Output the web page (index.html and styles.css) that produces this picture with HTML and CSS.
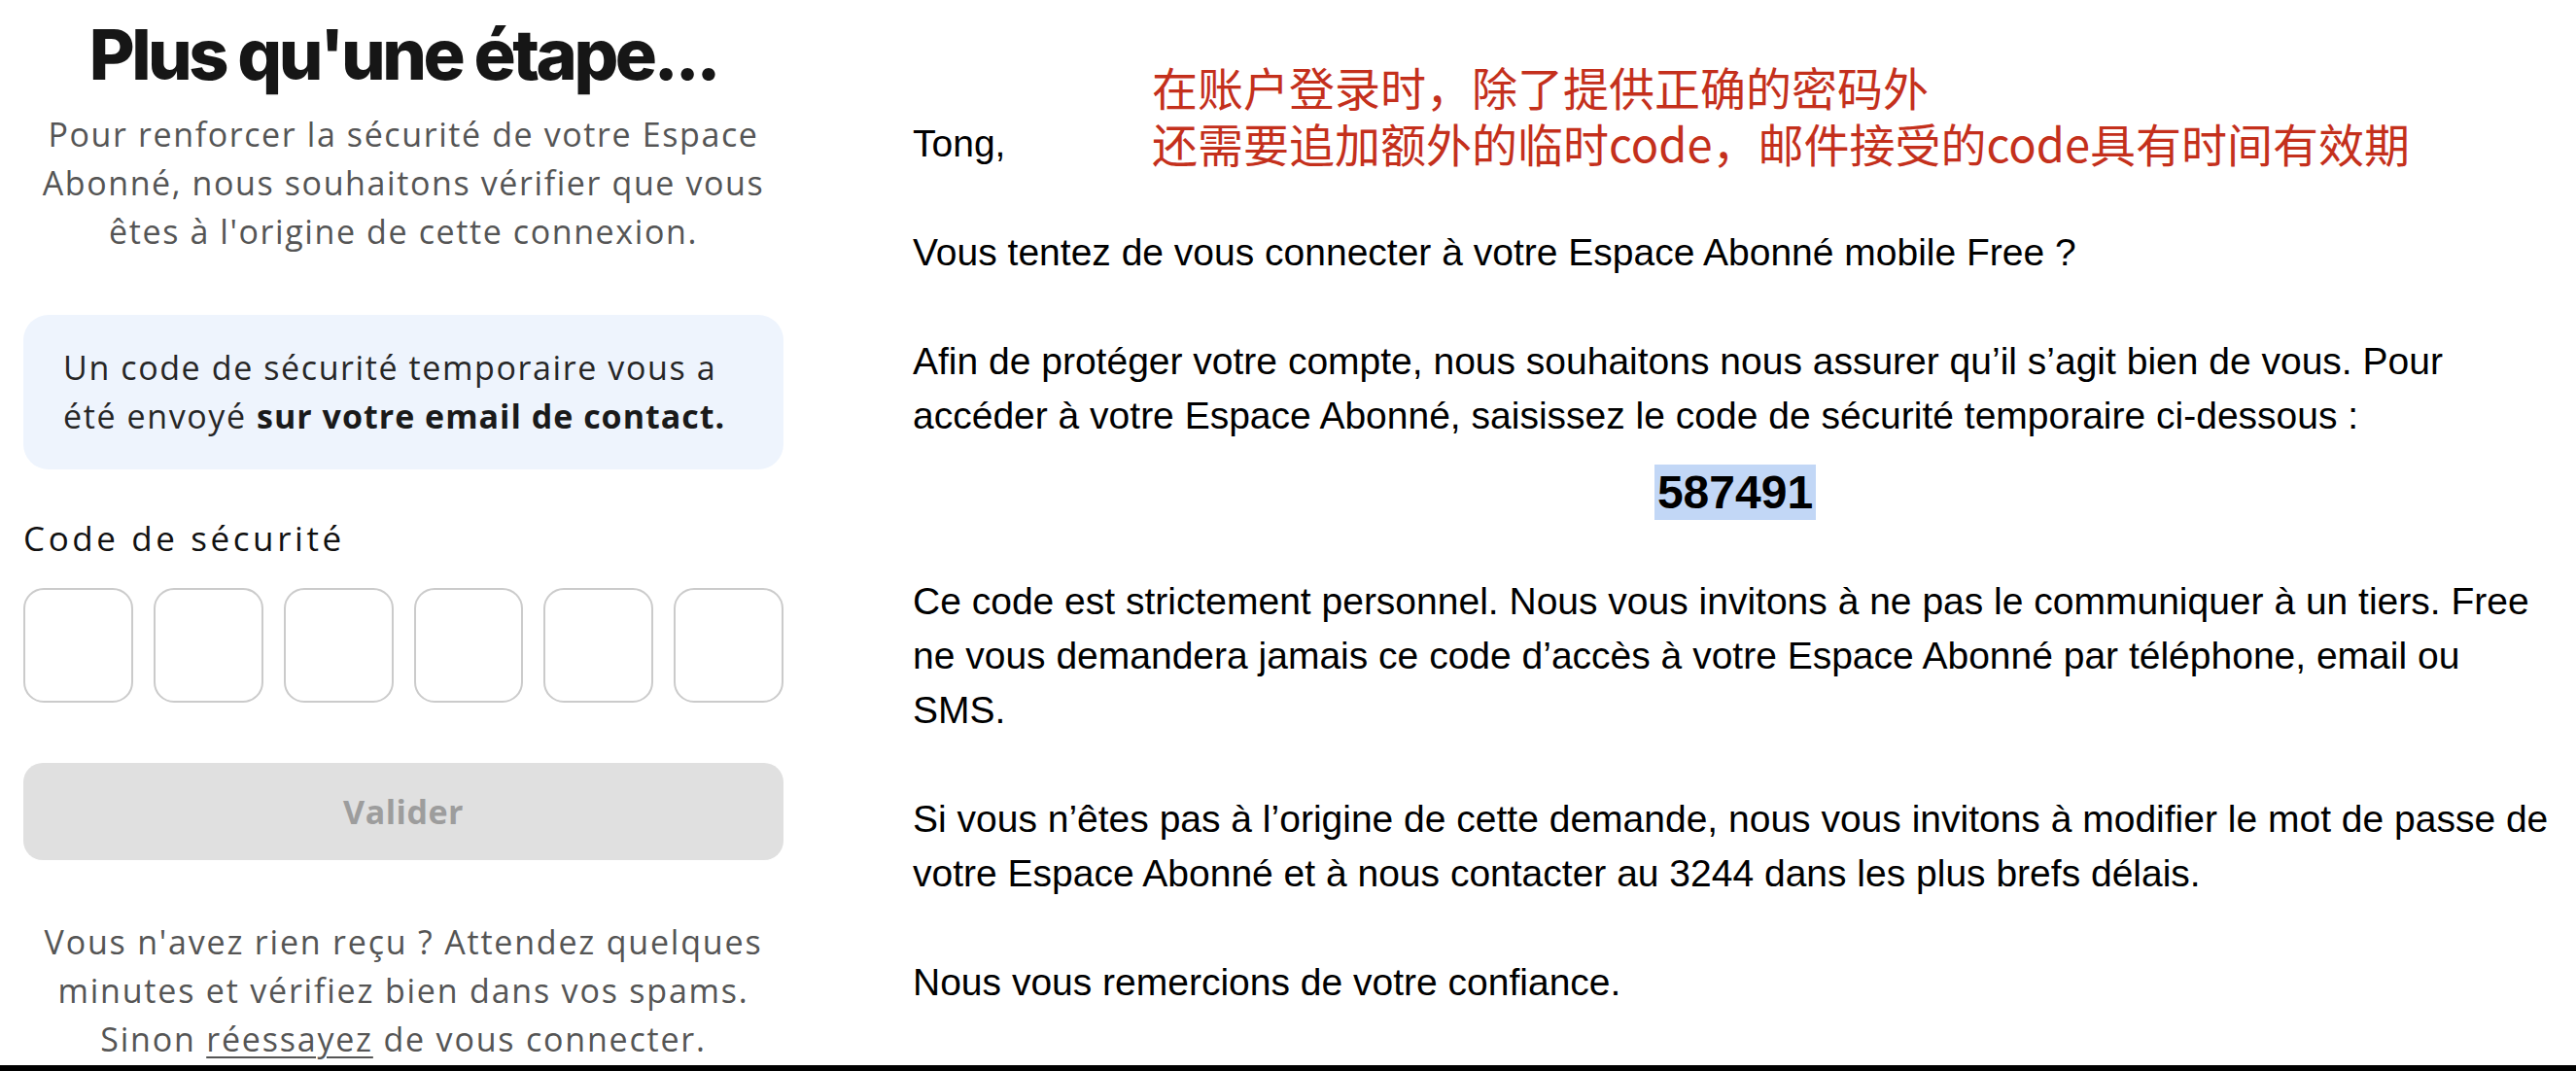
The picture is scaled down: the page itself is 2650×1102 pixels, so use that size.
FILE: index.html
```html
<!DOCTYPE html>
<html lang="fr">
<head>
<meta charset="utf-8">
<title>Plus qu'une étape...</title>
<link rel="stylesheet" href="styles.css">
</head>
<body>
<div class="page">
  <main class="layout">
    <section class="auth">
      <h1 class="title">Plus qu'une étape...</h1>
      <p class="lead">Pour renforcer la sécurité de votre Espace<br>Abonné, nous souhaitons vérifier que vous<br>êtes à l'origine de cette connexion.</p>
      <div class="notice">
        <p>Un code de sécurité temporaire vous a<br>été envoyé <strong>sur votre email de contact.</strong></p>
      </div>
      <label class="field-label" for="c1">Code de sécurité</label>
      <div class="otp">
        <input class="otp-cell" id="c1" maxlength="1" inputmode="numeric">
        <input class="otp-cell" maxlength="1" inputmode="numeric">
        <input class="otp-cell" maxlength="1" inputmode="numeric">
        <input class="otp-cell" maxlength="1" inputmode="numeric">
        <input class="otp-cell" maxlength="1" inputmode="numeric">
        <input class="otp-cell" maxlength="1" inputmode="numeric">
      </div>
      <button class="submit" type="button" disabled>Valider</button>
      <p class="help">Vous n'avez rien reçu ? Attendez quelques<br>minutes et vérifiez bien dans vos spams.<br>Sinon <a class="retry" href="#">réessayez</a> de vous connecter.</p>
    </section>

    <article class="email">
      <div class="greeting-row">
        <p class="greeting">Tong,</p>
        <div class="annotation">在账户登录时，除了提供正确的密码外<br>还需要追加额外的临时code，邮件接受的code具有时间有效期</div>
      </div>
      <p>Vous tentez de vous connecter à votre Espace Abonné mobile Free ?</p>
      <p class="before-code">Afin de protéger votre compte, nous souhaitons nous assurer qu’il s’agit bien de vous. Pour<br>accéder à votre Espace Abonné, saisissez le code de sécurité temporaire ci-dessous :</p>
      <div class="code"><span class="code-value">587491</span></div>
      <p>Ce code est strictement personnel. Nous vous invitons à ne pas le communiquer à un tiers. Free<br>ne vous demandera jamais ce code d’accès à votre Espace Abonné par téléphone, email ou<br>SMS.</p>
      <p>Si vous n’êtes pas à l’origine de cette demande, nous vous invitons à modifier le mot de passe de<br>votre Espace Abonné et à nous contacter au 3244 dans les plus brefs délais.</p>
      <p>Nous vous remercions de votre confiance.</p>
    </article>
  </main>
  <div class="edge"></div>
</div>
</body>
</html>
```

FILE: styles.css
```css
* { box-sizing: border-box; }

html, body {
  margin: 0;
  padding: 0;
  background: #ffffff;
}

.page {
  width: 2650px;
  height: 1102px;
  display: flex;
  flex-direction: column;
  overflow: hidden;
}

.layout {
  flex: 1;
  display: flex;
  align-items: flex-start;
  overflow: hidden;
}

/* ---------- left: verification form ---------- */
.auth {
  width: 782px;
  margin-left: 24px;
  padding-top: 20px;
  display: flex;
  flex-direction: column;
  font-family: "Open Sans", "Noto Sans", sans-serif;
  font-size: 34px;
  line-height: 50px;
  letter-spacing: 1.6px;
}

.title {
  margin: 0;
  text-align: center;
  font-family: Inter, "Noto Sans", sans-serif;
  font-weight: 800;
  font-size: 72px;
  line-height: 72px;
  letter-spacing: -3.5px;
  color: #161616;
}

.lead {
  margin: 21px 0 0;
  text-align: center;
  color: #555555;
}

.notice {
  margin-top: 61px;
  padding: 29px 41px 30px;
  background: #eef4fd;
  border-radius: 26px;
}

.notice p {
  margin: 0;
  color: #262626;
}

.notice strong {
  font-weight: 700;
  color: #1a1a1a;
  letter-spacing: 1px;
}

.field-label {
  display: block;
  margin-top: 46px;
  font-size: 35px;
  letter-spacing: 3.6px;
  color: #111111;
}

.otp {
  margin-top: 26px;
  display: grid;
  grid-template-columns: repeat(6, 1fr);
  gap: 21px;
}

.otp-cell {
  height: 118px;
  width: 100%;
  margin: 0;
  padding: 0;
  border: 2px solid #cbcbcb;
  border-radius: 21px;
  background: #ffffff;
  font: inherit;
  text-align: center;
}

.submit {
  margin-top: 62px;
  height: 100px;
  width: 100%;
  border: none;
  border-radius: 20px;
  background: #e0e0e0;
  color: #9d9d9d;
  font-family: "Open Sans", "Noto Sans", sans-serif;
  font-weight: 700;
  font-size: 34px;
  letter-spacing: 0.5px;
  padding: 0;
}

.help {
  margin: 59px 0 0;
  text-align: center;
  color: #555555;
  letter-spacing: 1.8px;
}

.retry {
  color: #555555;
  text-decoration: underline;
  text-underline-offset: 5px;
  text-decoration-thickness: 2px;
}

/* ---------- right: email ---------- */
.email {
  width: 1692px;
  margin-left: 133px;
  padding-top: 60px;
  font-family: "Liberation Sans", Arial, sans-serif;
  font-size: 39px;
  line-height: 56px;
  color: #000000;
}

.email p {
  margin: 0 0 56px;
  white-space: nowrap;
}

.greeting-row {
  display: flex;
  align-items: flex-end;
  margin-bottom: 56px;
}

.email p.greeting {
  flex: 0 0 246px;
  margin: 0;
}

.annotation {
  font-family: "Noto Sans CJK SC", "Noto Sans", sans-serif;
  font-size: 47px;
  line-height: 58px;
  color: #c4301c;
  white-space: nowrap;
}

.email p.before-code {
  margin-bottom: 22px;
}

.code {
  text-align: center;
  margin-bottom: 56px;
  line-height: 57px;
  height: 57px;
}

.code-value {
  display: inline-block;
  padding: 0 3px;
  font-weight: 700;
  font-size: 48px;
  line-height: 57px;
  background: #c2d7f6;
}

.edge {
  height: 6px;
  background: #000000;
}
```
